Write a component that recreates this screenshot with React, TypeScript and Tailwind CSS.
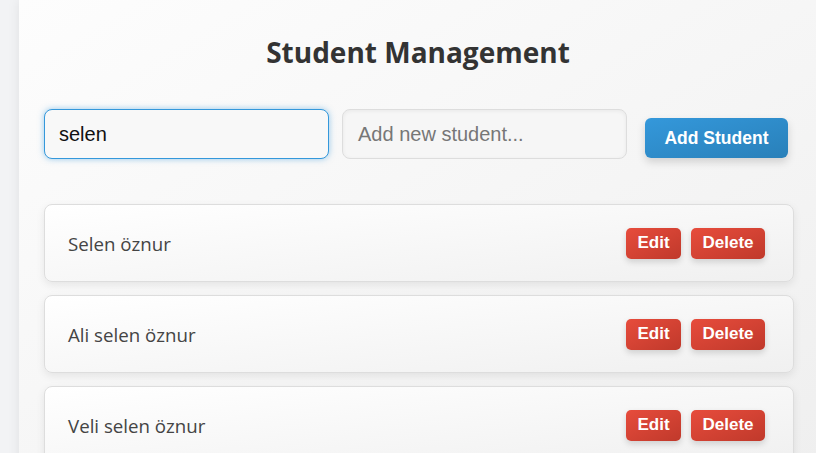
import React from "react";

const students = ["Selen öznur", "Ali selen öznur", "Veli selen öznur"];

export default function App() {
  return (
    <div className="w-[816px] h-[453px] overflow-hidden bg-[#f2f3f5] pl-[19px]" style={{ fontFamily: '"Open Sans", sans-serif' }}>
      <div className="w-[798px] h-[470px] bg-gradient-to-br from-[#fdfdfd] to-[#efefef] shadow-[0_0_12px_rgba(0,0,0,0.08)] pt-[32px] px-[25px]">
        <h1 className="text-center text-[28px] font-bold text-[#333] leading-[40px]">Student Management</h1>
        <div className="flex mt-[37px] gap-[13px]" style={{ fontFamily: '"Liberation Sans", Arial, sans-serif' }}>
          <div className="w-[285px] h-[50px] rounded-[8px] border border-[#3498db] bg-[#f8f8f8] shadow-[0_0_6px_rgba(52,152,219,0.5)] flex items-center px-[14px] text-[20px] text-[#111]">selen</div>
          <div className="w-[285px] h-[50px] rounded-[8px] border border-[#ddd] bg-[#f6f6f6] shadow-[inset_0_1px_4px_rgba(0,0,0,0.06)] flex items-center px-[15px] text-[20px] text-[#777]">Add new student...</div>
          <button className="self-end mb-[1px] ml-[5px] w-[143px] h-[40px] rounded-[6px] bg-gradient-to-br from-[#3498db] to-[#2980b9] text-white font-bold text-[17.5px] shadow-[0_4px_8px_rgba(0,0,0,0.15)]">Add Student</button>
        </div>
        <div className="mt-[45px] flex flex-col gap-[13px]">
          {students.map((s) => (
            <div key={s} className="w-[750px] h-[78px] rounded-[8px] border border-[#ddd] bg-gradient-to-br from-[#ffffff] to-[#f0f0f0] shadow-[0_3px_8px_rgba(0,0,0,0.08)] flex items-center justify-between pl-[23px] pr-[28px]">
              <span className="text-[18.7px] text-[#444] mt-[2px]">{s}</span>
              <div className="flex gap-[10px]" style={{ fontFamily: '"Liberation Sans", Arial, sans-serif' }}>
                <button className="w-[55px] h-[31px] rounded-[5px] bg-gradient-to-br from-[#e74c3c] to-[#c0392b] text-white font-bold text-[17px] shadow-[0_3px_6px_rgba(0,0,0,0.15)]">Edit</button>
                <button className="w-[74px] h-[31px] rounded-[5px] bg-gradient-to-br from-[#e74c3c] to-[#c0392b] text-white font-bold text-[17px] shadow-[0_3px_6px_rgba(0,0,0,0.15)]">Delete</button>
              </div>
            </div>
          ))}
        </div>
      </div>
    </div>
  );
}
